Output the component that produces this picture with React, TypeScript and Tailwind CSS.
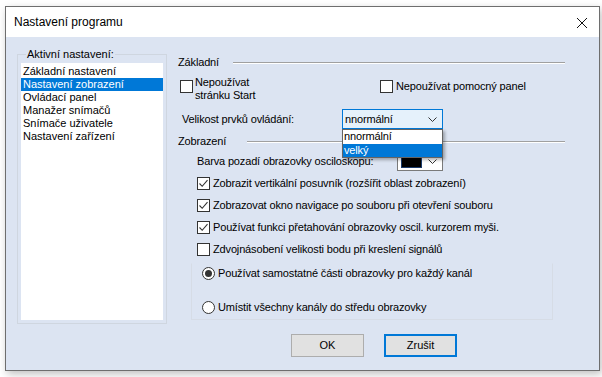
import { useState } from "react";

const items = [
  "Základní nastavení",
  "Nastavení zobrazení",
  "Ovládací panel",
  "Manažer snímačů",
  "Snímače uživatele",
  "Nastavení zařízení",
];

const Chevron = () => (
  <svg width="9" height="5" viewBox="0 0 9 5" className="text-[#333]">
    <path d="M0.5 0.5 L4.5 4.5 L8.5 0.5" fill="none" stroke="currentColor" strokeWidth="1" />
  </svg>
);

const CheckBox = ({ checked }: { checked?: boolean }) => (
  <div className="w-[13px] h-[13px] border border-[#333] bg-white flex items-center justify-center shrink-0">
    {checked && (
      <svg width="11" height="11" viewBox="0 0 11 11">
        <path d="M1.5 5.5 L4.2 8.3 L9.5 2.2" fill="none" stroke="#333" strokeWidth="1.1" />
      </svg>
    )}
  </div>
);

const Radio = ({ checked }: { checked?: boolean }) => (
  <div className="w-[13px] h-[13px] rounded-full border border-[#333] bg-white flex items-center justify-center shrink-0">
    {checked && <div className="w-[7px] h-[7px] rounded-full bg-[#333]" />}
  </div>
);

const Heading = ({ text, gap }: { text: string; gap: string }) => (
  <div className="flex items-center h-[13px]">
    <span>{text}</span>
    <div className={`flex-1 border-t border-t-[#a0a0a0] border-b border-b-white ${gap}`} />
  </div>
);

export default function App() {
  const [selected, setSelected] = useState(1);

  return (
    <div className="w-[602px] h-[377px] bg-white pt-[6px] pl-[5px] font-['Liberation_Sans',Arial,sans-serif] text-[11px] leading-[13px] text-black whitespace-nowrap">
      <div className="w-[595px] h-[365px] border border-[#6e6e6e] flex flex-col shadow-[2px_3px_8px_rgba(0,0,0,0.25)]">
        {/* title bar */}
        <div className="h-[30px] bg-white flex items-center justify-between pl-[8px] pr-[8px]">
          <span className="text-[12px] pt-[1px]">Nastavení programu</span>
          <svg width="12" height="12" viewBox="0 0 12 12" className="mr-[3px] mt-[2px]">
            <path d="M1 1 L11 11 M11 1 L1 11" stroke="#111" strokeWidth="1" />
          </svg>
        </div>

        <div className="flex-1 bg-[#dce4f2] flex">
          {/* left group */}
          <div className="ml-[11px] mt-[17px] w-[150px] h-[270px] border border-[#cfd6e0] relative pt-[8px] pl-[3px] pr-[3px]">
            <span className="absolute -top-[7px] left-[8px] px-[1px] bg-[#dce4f2]">Aktivní nastavení:</span>
            <div className="bg-white w-[142px] h-[257px] pt-[2px]">
              {items.map((it, i) => (
                <div
                  key={it}
                  onClick={() => setSelected(i)}
                  className={`h-[13px] pl-[2px] ${i === selected ? "bg-[#0078d7] text-white" : ""}`}
                >
                  {it}
                </div>
              ))}
            </div>
          </div>

          {/* right column */}
          <div className="ml-[11px] w-[387px] flex flex-col relative tracking-[-0.15px]">
            <div className="mt-[19px]">
              <Heading text="Základní" gap="ml-[14px]" />
            </div>

            <div className="mt-[7px] h-[26px] flex">
              <div className="flex ml-[2px] w-[200px]">
                <div className="mt-[4px]">
                  <CheckBox />
                </div>
                <div className="ml-[2px]">
                  <div>Nepoužívat</div>
                  <div>stránku Start</div>
                </div>
              </div>
              <div className="flex items-center h-[13px] mt-[4px] gap-[3px]">
                <CheckBox />
                <span>Nepoužívat pomocný panel</span>
              </div>
            </div>

            <div className="mt-[7px] h-[20px] flex items-center">
              <span className="ml-[4px] w-[160px]">Velikost prvků ovládání:</span>
              <div className="w-[101px] h-[20px] border border-[#0078d7] bg-[#e5f1fb] flex items-center justify-between pl-[2px] pr-[5px]">
                <span>nnormální</span>
                <Chevron />
              </div>
            </div>

            <div className="mt-[6px]">
              <Heading text="Zobrazení" gap="ml-[21px]" />
            </div>

            <div className="mt-[3px] h-[20px] flex items-center">
              <span className="ml-[19px] w-[200px]">Barva pozadí obrazovky osciloskopu:</span>
              <div className="w-[46px] h-[20px] border border-[#7a7a7a] bg-white flex items-center justify-between pl-[3px] pr-[5px]">
                <div className="w-[21px] h-[14px] bg-black border border-[#1a3a6a]" />
                <Chevron />
              </div>
            </div>

            <div className="mt-[1px] flex flex-col ml-[19px]">
              {[
                ["Zobrazit vertikální posuvník (rozšířit oblast zobrazení)", true],
                ["Zobrazovat okno navigace po souboru při otevření souboru", true],
                ["Používat funkci přetahování obrazovky oscil. kurzorem myši.", true],
                ["Zdvojnásobení velikosti bodu při kreslení signálů", false],
              ].map(([t, c]) => (
                <div key={t as string} className="h-[22px] flex items-center gap-[3px]">
                  <CheckBox checked={c as boolean} />
                  <span>{t as string}</span>
                </div>
              ))}
            </div>

            <div className="mt-[3px] ml-[13px] w-[362px] h-[57px] border border-[#d6dce6] border-t-transparent flex flex-col pl-[10px]">
              <div className="mt-[3px] h-[13px] flex items-center gap-[3px]">
                <Radio checked />
                <span>Používat samostatné části obrazovky pro každý kanál</span>
              </div>
              <div className="mt-[21px] h-[13px] flex items-center gap-[3px]">
                <Radio />
                <span>Umístit všechny kanály do středu obrazovky</span>
              </div>
            </div>

            <div className="mt-[14px] flex ml-[113px] gap-[20px] tracking-normal">
              <button className="w-[73px] h-[23px] bg-[#e1e1e1] border border-[#adadad]">OK</button>
              <button className="w-[73px] h-[23px] bg-[#e1e1e1] border-2 border-[#0078d7]">Zrušit</button>
            </div>

            {/* open dropdown list */}
            <div className="absolute top-[92px] left-[164px] w-[101px] bg-white border border-[#646464] shadow-[2px_2px_3px_rgba(0,0,0,0.3)]">
              <div className="h-[14px] pl-[1px]">nnormální</div>
              <div className="h-[13px] pl-[1px] bg-[#0078d7] text-white">velký</div>
            </div>
          </div>
        </div>
      </div>
    </div>
  );
}
